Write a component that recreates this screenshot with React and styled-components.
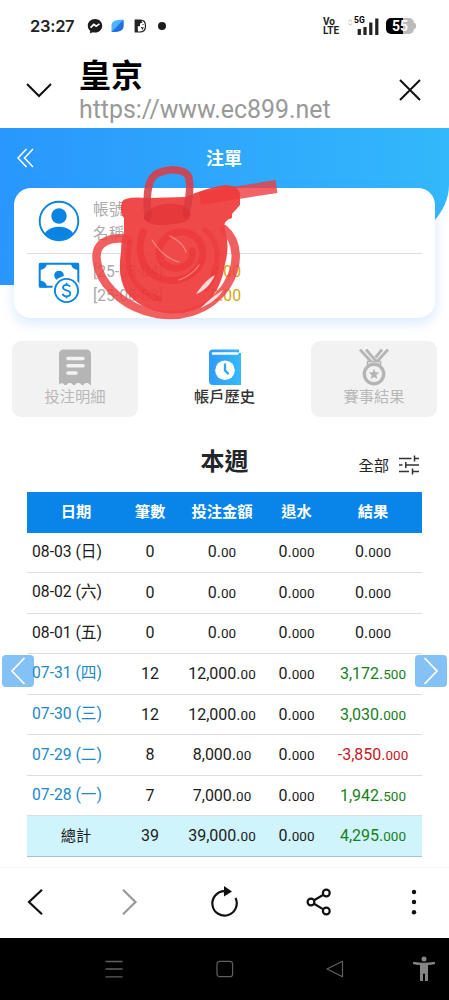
import React from 'react';
import styled, { createGlobalStyle } from 'styled-components';

const rows = [
  { date: '08-03 (日)', count: '0', bet: '0.00', rebate: '0.000', result: '0.000' },
  { date: '08-02 (六)', count: '0', bet: '0.00', rebate: '0.000', result: '0.000' },
  { date: '08-01 (五)', count: '0', bet: '0.00', rebate: '0.000', result: '0.000' },
  { date: '07-31 (四)', count: '12', bet: '12,000.00', rebate: '0.000', result: '3,172.500', link: true },
  { date: '07-30 (三)', count: '12', bet: '12,000.00', rebate: '0.000', result: '3,030.000', link: true },
  { date: '07-29 (二)', count: '8', bet: '8,000.00', rebate: '0.000', result: '-3,850.000', link: true },
  { date: '07-28 (一)', count: '7', bet: '7,000.00', rebate: '0.000', result: '1,942.500', link: true },
];

const resultColor = (value) => {
  const n = parseFloat(value.replace(',', ''));
  if (n > 0) return '#16801c';
  if (n < 0) return '#c8161d';
  return '#1b1b1b';
};

const Amount = ({ value }) => {
  const [whole, decimal] = value.split('.');
  return (
    <>
      {whole}.<Decimal>{decimal}</Decimal>
    </>
  );
};

const StatusIcons = () => (
  <svg width="76" height="18" viewBox="0 0 76 18">
    <path d="M8 2C3.800 2 .8 5 .8 8.700c0 2 .8 3.800 2.300 5V16.500l2.500-1.300c.8.2 1.600.3 2.400.3 4.200 0 7.200-3 7.200-6.800S12.200 2 8 2z" fill="#1c1c1c" />
    <path d="M3.600 10.700 6.800 7.300l2.400 1.900 3.200-2.300" fill="none" stroke="#fff" strokeWidth="1.700" />
    <path d="M24.500 15V8.500C24.500 4.500 28 2.800 36.500 2.800V9c0 4.400-3.500 6-12 6z" fill="#4ab3fa" />
    <path d="M24.500 15 36.500 2.800V9c0 4.400-3.500 6-12 6z" fill="#246fe0" />
    <path d="M48.200 3.200h5.500c3.200 0 4.800 2.300 4.800 5.800s-2 6-5.500 6h-4.800z" fill="none" stroke="#222" strokeWidth="1.200" />
    <path d="M48 3h6l1.500 2.500-2.500 1v2.800h-2.300L51 15h-3z" fill="#222" />
    <path d="M54 10.500l2 .5-1 1.500M55.500 7.500h1" fill="none" stroke="#222" strokeWidth="1.200" />
  </svg>
);

const SignalIcon = () => (
  <svg width="31" height="19" viewBox="0 0 31 19">
    <path d="M.5 4.500l1.700-1.700L4 4.500M.5 6.500l1.700 1.700L4 6.500" fill="none" stroke="#bbb" strokeWidth="1" />
    <path d="M11.300 12v6M17 10v8M22.800 5.500V18M28.800 1.500V18" stroke="#222" strokeWidth="3.200" />
  </svg>
);

const UserIcon = () => (
  <svg width="42" height="42" viewBox="0 0 42 42">
    <clipPath id="userClip">
      <circle cx="21" cy="21" r="19" />
    </clipPath>
    <circle cx="21" cy="21" r="19.300" fill="#fff" stroke="#0984e3" strokeWidth="1.900" />
    <circle cx="21" cy="16" r="7.700" fill="#0984e3" />
    <ellipse cx="21" cy="37" rx="15" ry="10.300" fill="#0984e3" clipPath="url(#userClip)" />
  </svg>
);

const MoneyIcon = () => (
  <svg width="42" height="44" viewBox="0 0 42 44">
    <rect x="1.700" y="1.700" width="38.600" height="23" rx="1" fill="none" stroke="#0984e3" strokeWidth="2" />
    <path d="M1 1h8c0 4-3 7-8 7zM41 1h-8c0 4 3 7 8 7zM1 25.500h8c0-4-3-7-8-7zM41 25.500h-8c0-4 3-7 8-7z" fill="#0984e3" />
    <circle cx="21" cy="13.500" r="4.800" fill="#0984e3" />
    <circle cx="28.500" cy="28.500" r="14.400" fill="#fff" />
    <circle cx="28.500" cy="28.500" r="11.600" fill="#fff" stroke="#0984e3" strokeWidth="1.900" />
    <path d="M32 24.800c-.5-1.400-1.700-2-3.500-2-2 0-3.500 1-3.500 2.700 0 4 7.300 1.800 7.300 6 0 1.700-1.600 2.800-3.700 2.800s-3.500-.9-4-2.600M28.500 20.700v2M28.500 34v2.300" fill="none" stroke="#0984e3" strokeWidth="1.700" />
  </svg>
);

const ReceiptIcon = () => (
  <svg width="34" height="37" viewBox="0 0 34 37">
    <path d="M1 5a4.500 4.500 0 0 1 4.500-4.500h23A4.500 4.500 0 0 1 33 5v31h-1c-1.500-2.600-5-2.600-6.500 0h-2c-1.500-2.600-5-2.600-6.500 0h-2c-1.500-2.600-5-2.600-6.500 0h-2c-1.200-2-3.500-2.300-5.500-.5z" fill="#b5b5b5" />
    <path d="M10 9.500h15M10 16.700h15M10 24h8" stroke="#f2f2f2" strokeWidth="3.600" strokeLinecap="round" />
  </svg>
);

const HistoryIcon = () => (
  <svg width="34" height="37" viewBox="0 0 34 37">
    <defs>
      <linearGradient id="bookFill" x1="0" x2="1">
        <stop offset="0" stopColor="#2f9bfb" />
        <stop offset="1" stopColor="#35b9fa" />
      </linearGradient>
    </defs>
    <path d="M5 .5h26v3.500h2V36H5a4 4 0 0 1-4-4V4.500a4 4 0 0 1 4-4z" fill="url(#bookFill)" />
    <path d="M5 4.500h24.500" stroke="#fff" strokeWidth="2.400" strokeLinecap="round" />
    <circle cx="17" cy="21.300" r="9.800" fill="#fff" />
    <path d="M17 14.500v7l3.600 3.600" fill="none" stroke="#31a7fa" strokeWidth="2.300" />
  </svg>
);

const MedalIcon = () => (
  <svg width="34" height="37" viewBox="0 0 34 37">
    <path d="M3 .5l11 12M9 .5l10 11.500M31 .5 20 12.500M25 .5l-6.500 8" stroke="#b5b5b5" strokeWidth="2.800" />
    <path d="M10.500 16v-3.500h13V16" fill="none" stroke="#b5b5b5" strokeWidth="1.600" />
    <circle cx="17" cy="25" r="9.700" fill="#f2f2f2" stroke="#b5b5b5" strokeWidth="3.400" />
    <path d="M17 19.800l1.500 3.500 3.800.3-2.900 2.500.9 3.800-3.300-2-3.300 2 .9-3.800-2.900-2.500 3.800-.3z" fill="#b5b5b5" />
  </svg>
);

const FilterIcon = () => (
  <svg width="20" height="20" viewBox="0 0 20 20" fill="none" stroke="#333" strokeWidth="1.500">
    <path d="M0 3.500h12.500M15.500 3.500H20M15.500 .5v6M0 10h3.500M6.800 10H20M6.800 7v6M0 16.500h10M13.500 16.500H20M13.500 13.500v6" />
  </svg>
);

// red marker strokes over the account details
const Marker = () => (
  <MarkerSvg width="190" height="160" viewBox="90 165 190 160" fill="none" strokeLinecap="round" strokeLinejoin="round">
    <path d="M200 198.500l76.500-12" stroke="#f03c40" strokeWidth="13" strokeLinecap="butt" opacity=".8" />
    <path d="M122 202Q124 196 148 198L186 197Q208 187 226 185Q240 186 240 196V205L232 214V218Q222 221 225 229Q230 246 225 264Q221 291 205 304Q190 316 165 313Q140 309 127 293Q117 278 121 252Q121 240 124 232V218Q119 212 122 202Z" fill="#ef3a3b" opacity=".92" />
    <path d="M148 217C146 196 147 178 158 173C172 167 187 170 189 178C191 187 189 200 186 214" stroke="#dc3b43" strokeWidth="7.500" opacity=".88" />
    <path d="M128 239C104 236 94 246 97 262C99 281 119 303 145 311C176 321 210 312 227 285C240 264 238 241 224 229" stroke="#ee4243" strokeWidth="8.500" opacity=".84" />
    <path d="M146 213C155 202 181 201 188 209C195 218 188 223 172 224C156 227 138 223 146 213Z" fill="#da2a2d" opacity=".5" />
    <path d="M143 232C136 252 142 273 162 279C182 285 202 272 203 253C202 235 183 226 168 236C154 247 157 264 172 268C185 270 194 261 192 251" stroke="#e11d22" strokeWidth="7" opacity=".28" />
    <path d="M130 243C124 270 134 291 159 299M205 230C221 243 221 269 206 289" stroke="#e2282b" strokeWidth="5" opacity=".3" />
    <path d="M215 275C211 284 205 291 196 294C201 287 207 279 215 275ZM223 290C218 299 211 303 201 308C207 301 215 295 223 290Z" fill="#fff" opacity=".8" />
    <path d="M152 240C159 251 168 259 179 262M199 265C194 273 187 277 179 280M170 236C178 240 184 245 186 252" stroke="#fbb0ae" strokeWidth="1.200" opacity=".6" />
  </MarkerSvg>
);

const App = () => {
  return (
    <>
      <GlobalStyle />
      <Phone>
        <StatusBar>
          <Clock>23:27</Clock>
          <StatusIcons />
          <Dot />
          <Volte>
            Vo
            <br />
            LTE
          </Volte>
          <Signal>
            <Network>5G</Network>
            <SignalIcon />
          </Signal>
          <Battery>
            55
            <BatteryTip />
          </Battery>
        </StatusBar>

        <BrowserHeader>
          <svg width="26" height="15" viewBox="0 0 26 15" fill="none" stroke="#111" strokeWidth="2">
            <path d="M1 1l12 12L25 1" />
          </svg>
          <SiteInfo>
            <SiteName>皇京</SiteName>
            <SiteUrl>https://www.ec899.net</SiteUrl>
          </SiteInfo>
          <svg width="22" height="22" viewBox="0 0 22 22" fill="none" stroke="#111" strokeWidth="2">
            <path d="M1 1l20 20M21 1 1 21" />
          </svg>
        </BrowserHeader>

        <Page>
          <Hero />
          <PageHeader>
            <svg width="17" height="20" viewBox="0 0 17 20" fill="none" stroke="#fff" strokeWidth="1.500">
              <path d="M9.500 1 1 10l8.500 9M16 1l-8.500 9 8.500 9" />
            </svg>
            <PageTitle>注單</PageTitle>
          </PageHeader>

          <Card>
            <CardRow>
              <UserIcon />
              <CardText $shifted>
                <div>帳號</div>
                <div>名稱</div>
              </CardText>
            </CardRow>
            <CardRow $divided>
              <MoneyIcon />
              <CardText>
                <Balance>
                  [25-08-04] <Gold>0.00</Gold>
                </Balance>
                <Balance>
                  [25-08-03] <Gold>0.00</Gold>
                </Balance>
              </CardText>
            </CardRow>
            <Marker />
          </Card>

          <Tabs>
            <Tab>
              <ReceiptIcon />
              投注明細
            </Tab>
            <Tab $active>
              <HistoryIcon />
              帳戶歷史
            </Tab>
            <Tab>
              <MedalIcon />
              賽事結果
            </Tab>
          </Tabs>

          <SectionHeader>
            <SectionTitle>本週</SectionTitle>
            <Filter>
              <FilterLabel>全部</FilterLabel>
              <FilterIcon />
            </Filter>
          </SectionHeader>

          <Table>
            <HeadRow>
              <Cell>日期</Cell>
              <Cell>筆數</Cell>
              <Cell>投注金額</Cell>
              <Cell>退水</Cell>
              <Cell>結果</Cell>
            </HeadRow>
            {rows.map((row) => (
              <Row key={row.date}>
                <DateCell $link={row.link}>{row.date}</DateCell>
                <Cell>{row.count}</Cell>
                <Cell><Amount value={row.bet} /></Cell>
                <Cell><Amount value={row.rebate} /></Cell>
                <Cell $color={resultColor(row.result)}><Amount value={row.result} /></Cell>
              </Row>
            ))}
            <TotalRow>
              <TotalLabel>總計</TotalLabel>
              <Cell>39</Cell>
              <Cell><Amount value="39,000.00" /></Cell>
              <Cell><Amount value="0.000" /></Cell>
              <Cell $color={resultColor('4,295.000')}><Amount value="4,295.000" /></Cell>
            </TotalRow>
          </Table>

          <WeekButton $side="left">
            <svg width="16" height="28" viewBox="0 0 16 28" fill="none" stroke="#fff" strokeWidth="1.800">
              <path d="M14.500 1 2 14l12.500 13" />
            </svg>
          </WeekButton>
          <WeekButton $side="right">
            <svg width="16" height="28" viewBox="0 0 16 28" fill="none" stroke="#fff" strokeWidth="1.800">
              <path d="M1.500 1 14 14 1.500 27" />
            </svg>
          </WeekButton>
        </Page>

        <BrowserNav>
          <svg width="30" height="30" viewBox="0 0 30 30" fill="none" stroke="#111" strokeWidth="2.200">
            <path d="M22 2.800 9 15l13 12.200" />
          </svg>
          <svg width="30" height="30" viewBox="0 0 30 30" fill="none" stroke="#999" strokeWidth="2.200">
            <path d="M8 2.800 20.500 15 8 27.200" />
          </svg>
          <svg width="30" height="32" viewBox="0 0 30 32" fill="none" stroke="#111" strokeWidth="2.200">
            <path d="M14.500 5.200A12.200 12.200 0 1 0 25.500 12" />
            <path d="M14 0l8 5.500-8 5z" fill="#111" stroke="none" />
          </svg>
          <svg width="30" height="30" viewBox="0 0 30 30" fill="none" stroke="#111" strokeWidth="2.200">
            <path d="M10 13.200 19 8M10 16.800l9 5.300" />
            <circle cx="7" cy="15" r="3.400" />
            <circle cx="22.300" cy="6" r="3.400" />
            <circle cx="22.300" cy="24" r="3.400" />
          </svg>
          <svg width="30" height="30" viewBox="0 0 30 30" fill="#111">
            <circle cx="15" cy="5" r="2.200" />
            <circle cx="15" cy="15" r="2.200" />
            <circle cx="15" cy="25.200" r="2.200" />
          </svg>
        </BrowserNav>

        <SystemNav>
          <svg width="20" height="20" viewBox="0 0 20 20" fill="none" stroke="#606060" strokeWidth="1.300">
            <path d="M1.500 2.500H18.500M1.500 10H18.500M1.500 17.800H18.500" />
          </svg>
          <svg width="20" height="20" viewBox="0 0 20 20" fill="none" stroke="#606060" strokeWidth="1.200">
            <rect x="2" y="2.300" width="15.600" height="15.400" rx="2.800" />
          </svg>
          <svg width="20" height="20" viewBox="0 0 20 20" fill="none" stroke="#606060" strokeWidth="1.200" strokeLinejoin="round">
            <path d="M2 10 17.500 2.300v15.400z" />
          </svg>
          <svg width="24" height="26" viewBox="0 0 24 26" fill="#858585">
            <circle cx="12" cy="3" r="2.500" />
            <path d="M1.300 5.700c7 1.300 14.400 1.300 21.400 0l.4 2.300c-2.300.5-4.600.9-7.100 1.100V25h-3v-7.200h-2V25H8V9.100c-2.500-.2-4.800-.6-7.100-1.100z" />
          </svg>
        </SystemNav>
      </Phone>
    </>
  );
};

const GlobalStyle = createGlobalStyle`
  * {
    box-sizing: border-box;
  }

  body {
    margin: 0;
    background: #fff;
    font-family: Roboto, 'Noto Sans CJK TC', sans-serif;
  }

  svg {
    display: block;
    flex-shrink: 0;
  }
`;

const Phone = styled.div`
  width: 449px;
  height: 1000px;
  display: flex;
  flex-direction: column;
  overflow: hidden;
`;

const StatusBar = styled.div`
  height: 52px;
  padding: 0 33px 0 30px;
  display: flex;
  align-items: center;
  flex-shrink: 0;
`;

const Clock = styled.div`
  width: 57px;
  font-family: Inter, Roboto, sans-serif;
  font-size: 16.5px;
  font-weight: 600;
  letter-spacing: -0.3px;
  color: #222;
`;

const Dot = styled.div`
  width: 8px;
  height: 8px;
  margin-left: -5px;
  border-radius: 50%;
  background: #1c1c1c;
`;

const Volte = styled.div`
  margin-left: auto;
  width: 25px;
  font-size: 10px;
  font-weight: 700;
  line-height: 9px;
  color: #222;
`;

const Signal = styled.div`
  position: relative;
  margin-right: 7px;
`;

const Network = styled.div`
  position: absolute;
  left: 6px;
  top: -1px;
  font-size: 8.5px;
  font-weight: 700;
  line-height: 9px;
`;

const Battery = styled.div`
  position: relative;
  width: 28px;
  height: 16px;
  margin-right: 2px;
  border-radius: 5px;
  background: linear-gradient(90deg, #000 60%, #bbb 60%);
  color: #fff;
  font-size: 14px;
  font-weight: 700;
  line-height: 16px;
  text-align: center;
`;

const BatteryTip = styled.div`
  position: absolute;
  right: -2px;
  top: 5px;
  width: 3px;
  height: 6px;
  border-radius: 0 2px 2px 0;
  background: #bbb;
`;

const BrowserHeader = styled.div`
  height: 76px;
  padding: 0 28px 0 26px;
  display: flex;
  align-items: center;
  flex-shrink: 0;
`;

const SiteInfo = styled.div`
  flex: 1;
  margin-left: 27px;
  white-space: nowrap;
`;

const SiteName = styled.div`
  padding-top: 1px;
  font-size: 32px;
  font-weight: 700;
  line-height: 38px;
  color: #000;
`;

const SiteUrl = styled.div`
  font-size: 24.9px;
  line-height: 29px;
  color: #999;
`;

const Page = styled.main`
  position: relative;
  height: 739px;
  flex-shrink: 0;
`;

const Hero = styled.div`
  position: absolute;
  top: 0;
  left: 0;
  width: 449px;
  height: 157px;
  border-bottom-right-radius: 222px 100px;
  background: linear-gradient(90deg, #2997fd, #33b8fb);
`;

const PageHeader = styled.div`
  position: relative;
  height: 60px;
  padding-left: 17px;
  display: flex;
  align-items: center;
`;

const PageTitle = styled.div`
  flex: 1;
  margin: 0 35px 2px 0;
  font-size: 18px;
  font-weight: 700;
  text-align: center;
  color: #fff;
`;

const Card = styled.section`
  position: relative;
  width: 421px;
  height: 130px;
  margin: 0 0 0 14px;
  padding: 0 13px;
  border-radius: 17px;
  background: #fff;
  box-shadow: 0 5px 14px rgba(60, 145, 250, 0.2);
`;

const CardRow = styled.div`
  height: ${({ $divided }) => ($divided ? '60px' : '65px')};
  padding-left: 11px;
  display: flex;
  align-items: center;
  border-top: ${({ $divided }) => ($divided ? '1px solid #ddd' : 'none')};
`;

const CardText = styled.div`
  margin-left: 13px;
  padding-top: ${({ $shifted }) => ($shifted ? '2px' : '0')};
  font-size: 15.7px;
  line-height: 24px;
  color: #aaa;
`;

const Balance = styled.div`
  width: 148px;
  display: flex;
  justify-content: space-between;
`;

const Gold = styled.span`
  color: #d3a510;
`;

const MarkerSvg = styled.svg`
  position: absolute;
  left: 76px;
  top: -23px;
`;

const Tabs = styled.div`
  margin-top: 23px;
  padding: 0 12px;
  display: flex;
  justify-content: space-between;
`;

const Tab = styled.div`
  width: 126px;
  height: 76px;
  padding-top: 8px;
  display: flex;
  flex-direction: column;
  align-items: center;
  border-radius: 9px;
  background: ${({ $active }) => ($active ? '#fff' : '#f2f2f2')};
  color: ${({ $active }) => ($active ? '#333' : '#b8b8b8')};
  font-size: 15.3px;
  font-weight: ${({ $active }) => ($active ? 500 : 400)};
  line-height: 22px;
`;

const SectionHeader = styled.div`
  height: 75px;
  padding: 13px 30px 0;
  display: grid;
  grid-template-columns: 1fr auto 1fr;
  align-items: center;
`;

const SectionTitle = styled.div`
  grid-column: 2;
  padding-bottom: 4px;
  font-size: 24px;
  font-weight: 700;
  color: #222529;
`;

const Filter = styled.div`
  padding-top: 7px;
  display: flex;
  justify-content: flex-end;
  align-items: center;
  gap: 10px;
`;

const FilterLabel = styled.span`
  padding-bottom: 2px;
  font-size: 15.3px;
  color: #222;
`;

const Table = styled.div`
  width: 395px;
  margin-left: 27px;
`;

const Row = styled.div`
  height: 40.55px;
  padding-bottom: 1px;
  display: grid;
  grid-template-columns: 98px 50px 94px 55px 98px;
  align-items: center;
  border-bottom: 1px solid #ddd;
  font-size: 16px;
  color: #1b1b1b;
`;

const HeadRow = styled(Row)`
  padding-bottom: 4px;
  border-bottom: none;
  background: #0984e9;
  color: #fff;
  font-size: 15.3px;
  font-weight: 700;
`;

const TotalRow = styled(Row)`
  background: #cff4fc;
  border-bottom-color: #a6c3ca;
`;

const Cell = styled.div`
  text-align: center;
  white-space: nowrap;
  color: ${({ $color }) => $color || 'inherit'};
`;

const DateCell = styled(Cell)`
  padding: 0 0 3px 5px;
  font-size: 15.7px;
  text-align: left;
  color: ${({ $link }) => ($link ? '#2188c9' : 'inherit')};
`;

const TotalLabel = styled(Cell)`
  padding-bottom: 3px;
  font-size: 15.3px;
`;

const Decimal = styled.span`
  font-size: 13.5px;
`;

const WeekButton = styled.div`
  position: absolute;
  top: 527px;
  ${({ $side }) => $side}: 2px;
  width: 32px;
  height: 32px;
  display: flex;
  align-items: center;
  justify-content: center;
  border-radius: 4px;
  background: rgba(9, 132, 233, 0.5);
`;

const BrowserNav = styled.nav`
  height: 71px;
  padding: 0 20px 2px;
  display: flex;
  align-items: center;
  justify-content: space-between;
  flex-shrink: 0;
  border-top: 1px solid #f3f3f3;
  background: #fff;
`;

const SystemNav = styled.nav`
  height: 62px;
  padding: 0 13px 0 104px;
  display: grid;
  grid-template-columns: 111px 110px 87px auto;
  align-items: center;
  flex-shrink: 0;
  background: #000;
`;

export default App;
